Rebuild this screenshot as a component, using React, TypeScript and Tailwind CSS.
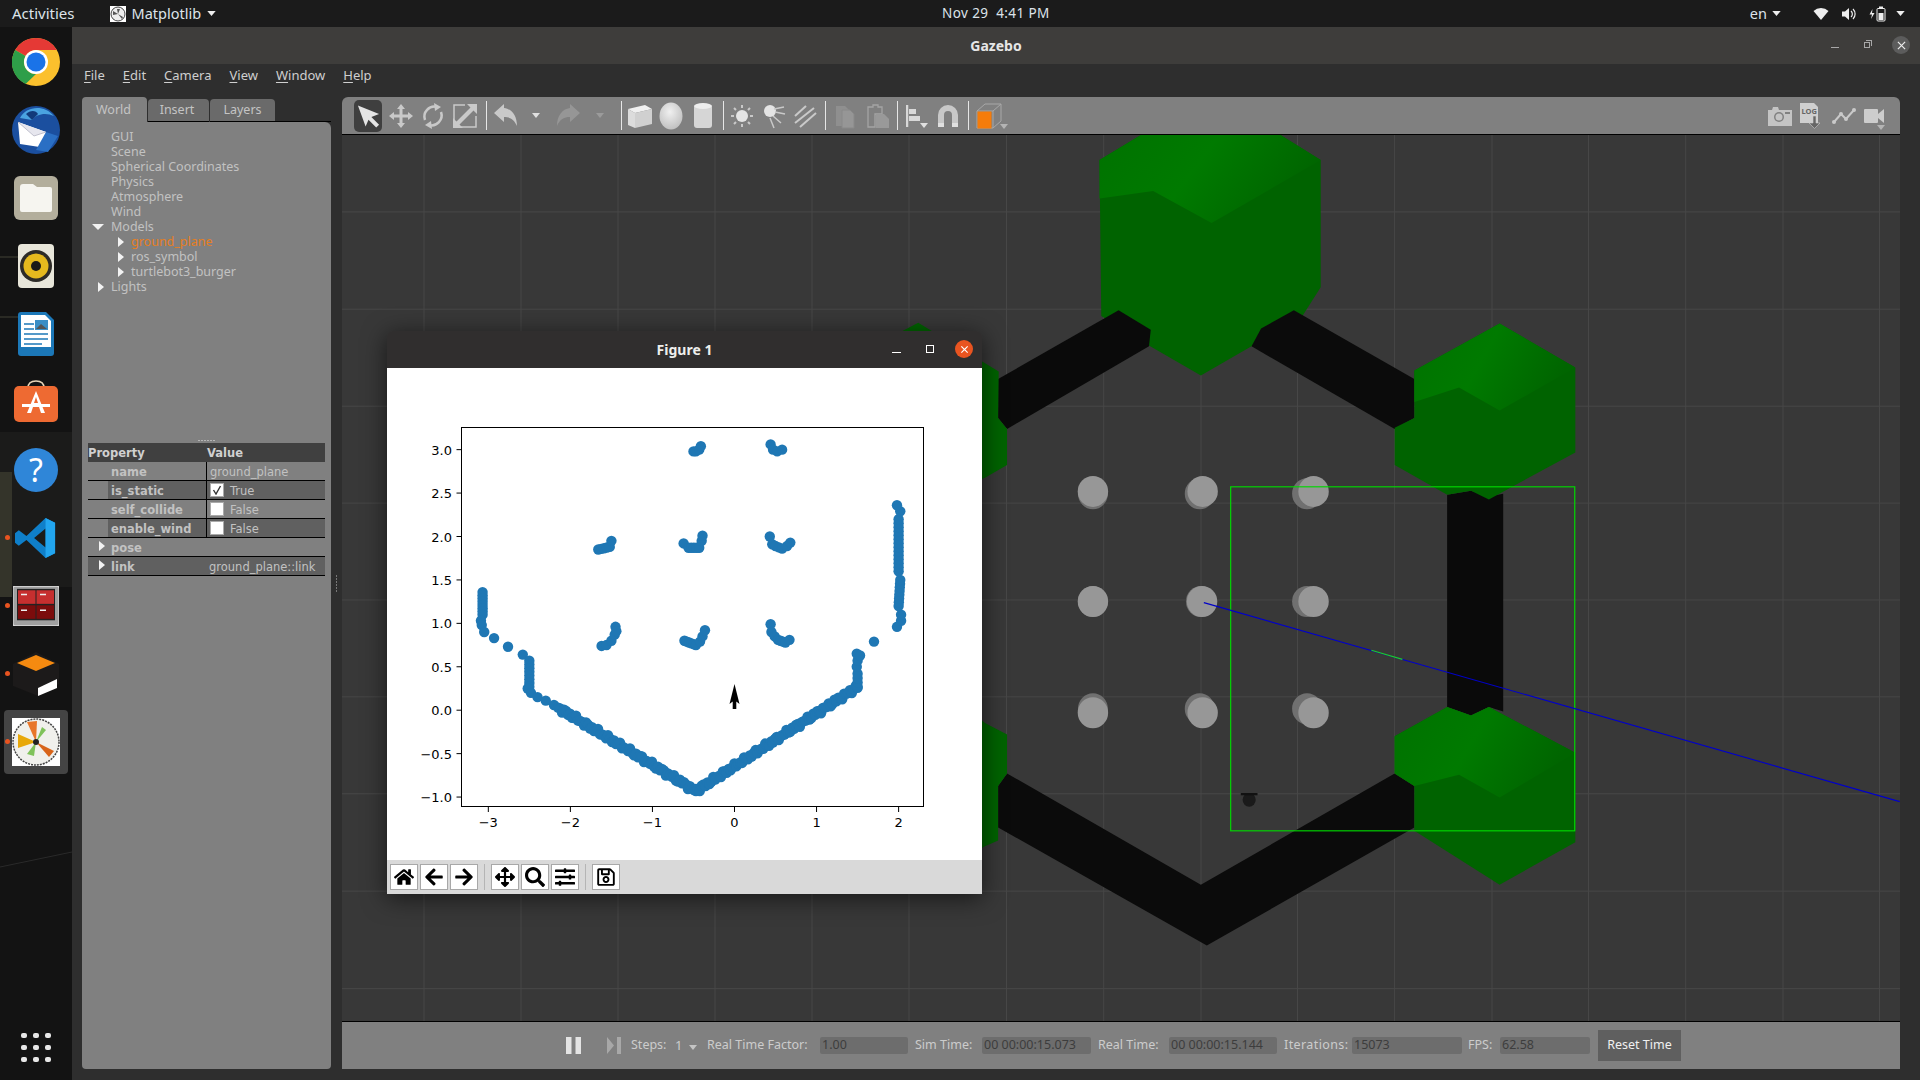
import type { ReactNode } from "react";
import { FaHome, FaArrowLeft, FaArrowRight, FaArrowsAlt, FaSearch, FaSlidersH, FaRegSave } from "react-icons/fa";

// small fixed wobble so the scan edge isn't ruler straight
const seg = (a: number[], b: number[], n: number) =>
  Array.from({ length: n }, (_, i) => {
    const w = n > 20 ? 0.022 * Math.sin(i * 2.3) + 0.012 * Math.sin(i * 5.1) : 0;
    return [a[0] + ((b[0] - a[0]) * i) / (n - 1), a[1] + ((b[1] - a[1]) * i) / (n - 1) + w];
  });

// lidar scan in data coords
const scan: number[][] = [
  [-0.5, 2.98], [-0.47, 2.98], [-0.43, 3.0], [-0.41, 3.04],
  [0.44, 3.06], [0.47, 3.0], [0.52, 2.98], [0.58, 3.0],
  ...seg([-1.66, 1.85], [-1.52, 1.88], 5), [-1.5, 1.95],
  [-0.62, 1.92], ...seg([-0.56, 1.87], [-0.43, 1.87], 5), [-0.4, 1.95], [-0.39, 2.01],
  [0.43, 2.0], [0.46, 1.91], ...seg([0.5, 1.89], [0.58, 1.86], 3), [0.64, 1.89], [0.68, 1.93],
  [-1.62, 0.74], [-1.56, 0.75], [-1.5, 0.8], [-1.46, 0.87], [-1.45, 0.96], [-1.44, 0.91],
  ...seg([-0.61, 0.8], [-0.47, 0.75], 6), [-0.42, 0.79], [-0.39, 0.85], [-0.36, 0.92],
  [0.44, 0.99], [0.45, 0.9], [0.49, 0.85], ...seg([0.53, 0.81], [0.62, 0.78], 4), [0.67, 0.81],
  ...seg([-3.07, 1.36], [-3.07, 1.1], 8), [-3.09, 1.03], [-3.08, 0.98], [-3.05, 0.9],
  [-2.93, 0.83], [-2.76, 0.73], [-2.58, 0.64],
  ...seg([-2.5, 0.57], [-2.5, 0.27], 8), [-2.52, 0.25], [-2.48, 0.2],
  [-2.4, 0.15], [-2.3, 0.11], [-2.2, 0.06],
  ...seg([-2.15, 0.03], [-0.47, -0.93], 70),
  ...seg([-0.47, -0.93], [1.5, 0.27], 85),
  ...seg([1.5, 0.27], [1.5, 0.42], 4), [1.49, 0.5], [1.5, 0.57], [1.49, 0.65], [1.53, 0.63],
  [1.7, 0.79],
  [1.98, 0.96], [2.03, 1.03], [2.03, 1.1], ...seg([2.0, 1.2], [2.02, 1.5], 8), ...seg([2.0, 1.6], [2.0, 2.2], 14), [2.02, 2.29], [1.98, 2.36],
];
const px = (x: number) => 734.5 + x * 82.06;
const py = (y: number) => 710.2 - y * 86.85;

function FigurePlot() {
  return (
    <svg viewBox="387 368 595 492" className="block h-[492px] w-[595px] bg-white">
      <rect x="461.5" y="427.5" width="462" height="379" fill="#fff" stroke="#000" strokeWidth="1" />
      {scan.map((p, i) => (
        <circle key={i} cx={px(p[0])} cy={py(p[1])} r="5.2" fill="#1f77b4" />
      ))}
      <path d="M734.5 684 L739.5 704 L736.3 701.5 L736.3 709 L732.7 709 L732.7 701.5 L729.5 704 Z" fill="#000" />
      {[-3, -2, -1, 0, 1, 2].map((t) => (
        <g key={t}>
          <line x1={px(t)} x2={px(t)} y1="807" y2="812" stroke="#000" />
          <text x={px(t)} y="827" textAnchor="middle" className="font-['DejaVu_Sans'] text-[13px]">
            {t < 0 ? `\u2212${-t}` : t}
          </text>
        </g>
      ))}
      {[-1, -0.5, 0, 0.5, 1, 1.5, 2, 2.5, 3].map((t) => (
        <g key={t}>
          <line x1="456.5" x2="461.5" y1={py(t)} y2={py(t)} stroke="#000" />
          <text x="452" y={py(t) + 5} textAnchor="end" className="font-['DejaVu_Sans'] text-[13px]">
            {t < 0 ? `\u2212${(-t).toFixed(1)}` : t.toFixed(1)}
          </text>
        </g>
      ))}
    </svg>
  );
}

function FigBtn({ children, className = "" }: { children: ReactNode; className?: string }) {
  return (
    <div className={`flex h-[26px] w-[28px] items-center justify-center border border-[#a8a8a8] bg-white text-[20px] text-black ${className}`}>
      {children}
    </div>
  );
}

function FigureWindow() {
  return (
    <div className="absolute left-[387px] top-[331px] z-20 flex w-[595px] flex-col overflow-hidden rounded-t-[6px] shadow-[0_4px_24px_rgba(0,0,0,0.6)]">
      <div className="relative flex h-[37px] items-center justify-center bg-[#302e2e] text-[14px] font-bold text-[#eeeeec]">
        Figure 1
        <span className="absolute left-[505px] top-[21px] h-px w-[9px] bg-white" />
        <span className="absolute left-[539px] top-[14px] h-[8px] w-[8px] border border-white" />
        <span className="absolute left-[568px] top-[9px] flex h-[18px] w-[18px] items-center justify-center rounded-full bg-[#e95420]">
          <svg viewBox="0 0 10 10" className="h-[9px] w-[9px]">
            <path d="M1.5 1.5 L8.5 8.5 M8.5 1.5 L1.5 8.5" stroke="#fff" strokeWidth="1.3" />
          </svg>
        </span>
      </div>
      <FigurePlot />
      <div className="flex h-[34px] items-center gap-[2px] bg-[#d9d9d9] pl-[3px]">
        <FigBtn><FaHome /></FigBtn>
        <FigBtn><FaArrowLeft /></FigBtn>
        <FigBtn><FaArrowRight /></FigBtn>
        <span className="mx-[4px] h-[26px] w-px bg-[#b5b5b5]" />
        <FigBtn><FaArrowsAlt /></FigBtn>
        <FigBtn><FaSearch /></FigBtn>
        <FigBtn><FaSlidersH /></FigBtn>
        <span className="mx-[4px] h-[26px] w-px bg-[#b5b5b5]" />
        <FigBtn><FaRegSave /></FigBtn>
      </div>
    </div>
  );
}

function TopBar() {
  return (
    <div className="relative flex h-[27px] shrink-0 items-center bg-[#1b1b1b] text-[14.5px] text-[#dde3ea]">
      <span className="ml-[12px] text-[15px]">Activities</span>
      <svg viewBox="0 0 16 16" className="ml-[35px] h-[16px] w-[16px]">
        <rect width="16" height="16" fill="#fff" />
        <circle cx="8" cy="8" r="7" fill="#eee" stroke="#444" strokeWidth="1" />
        <path d="M8 8 L3 5 L3 9 Z M8 8 L12 13 L13 11 Z M8 8 L10 3 L7 3 Z" fill="#555" />
      </svg>
      <span className="ml-[6px]">Matplotlib</span>
      <Caret className="ml-[6px]" />
      <span className="absolute left-[942px] top-[3px] text-[13.5px] tracking-[0.4px]">Nov 29&nbsp;&nbsp;4:41 PM</span>
      <div className="ml-auto flex items-center">
        <span>en</span>
        <Caret className="ml-[5px]" />
        <svg viewBox="0 0 16 14" className="ml-[32px] h-[14px] w-[16px]">
          <path d="M0.5 4 A11 11 0 0 1 15.5 4 L8 13 Z" fill="#eee" />
        </svg>
        <svg viewBox="0 0 16 14" className="ml-[12px] h-[14px] w-[16px]">
          <path d="M1 4.5 H4 L8 1 V13 L4 9.5 H1 Z" fill="#eee" />
          <path d="M10 4 A4 4 0 0 1 10 10 M12 2 A7 7 0 0 1 12 12" stroke="#eee" fill="none" strokeWidth="1.2" />
        </svg>
        <svg viewBox="0 0 18 16" className="ml-[12px] h-[16px] w-[18px]">
          <path d="M3.5 3 L0.5 8.5 H3 L2 13 L5.5 7 H3 Z" fill="#eee" />
          <rect x="8" y="2.5" width="8" height="12.5" rx="1" fill="none" stroke="#eee" />
          <rect x="10" y="0.5" width="4" height="2" fill="#eee" />
          <rect x="9.5" y="7" width="5" height="7" fill="#eee" />
        </svg>
        <Caret className="ml-[9px] mr-[15px]" />
      </div>
    </div>
  );
}

function Caret({ className = "" }: { className?: string }) {
  return (
    <svg viewBox="0 0 10 6" className={`h-[5px] w-[9px] ${className}`}>
      <path d="M0 0 H10 L5 6 Z" fill="#eee" />
    </svg>
  );
}

const dockIcons: ReactNode[] = [
  <svg key="chrome" viewBox="0 0 48 48" className="h-[48px] w-[48px]">
    <circle cx="24" cy="24" r="24" fill="#fbc02d" />
    <path d="M24 0 A24 24 0 0 1 44.8 12 H24 A12 12 0 0 0 13.6 18 L3.2 12 A24 24 0 0 1 24 0 Z" fill="#e53935" />
    <path d="M3.2 12 L13.6 18 A12 12 0 0 0 24 36 L13.6 46 A24 24 0 0 1 3.2 12 Z" fill="#2e9e49" />
    <circle cx="24" cy="24" r="12" fill="#fff" />
    <circle cx="24" cy="24" r="9.5" fill="#1a73e8" />
  </svg>,
  <svg key="tb" viewBox="0 0 48 48" className="h-[48px] w-[48px]">
    <circle cx="24" cy="24" r="24" fill="#1b4f9f" />
    <path d="M8 12 C14 0 32 -2 42 10 C34 6 24 8 20 14 Z" fill="#4aa3e0" />
    <path d="M6 16 L34 26 L34 42 L8 38 Z" fill="#fff" />
    <path d="M6 16 L22 30 L34 26" fill="#e6e6ee" stroke="#aab" strokeWidth="0.7" />
    <path d="M34 26 L46 30 L36 46 L24 44 Z" fill="#2a6fc4" />
    <path d="M14 8 C18 4 24 4 26 8 L20 14 Z" fill="#123a7a" />
  </svg>,
  <svg key="files" viewBox="0 0 44 44" className="h-[44px] w-[44px]">
    <rect width="44" height="44" rx="6" fill="#b3ae9c" />
    <path d="M6 11 Q6 8 9 8 H19 L23 11 H36 Q38 11 38 13 V34 Q38 36 36 36 H8 Q6 36 6 34 Z" fill="#f6f5f0" />
  </svg>,
  <svg key="rb" viewBox="0 0 36 44" className="h-[44px] w-[36px]">
    <rect width="36" height="44" rx="4" fill="#e8e6da" />
    <circle cx="18" cy="22" r="16" fill="#2d2b27" />
    <circle cx="18" cy="22" r="12.5" fill="#e5b91e" />
    <circle cx="18" cy="22" r="5" fill="#1c1b18" />
  </svg>,
  <svg key="writer" viewBox="0 0 36 44" className="h-[44px] w-[36px]">
    <path d="M0 3 Q0 0 3 0 H28 L36 8 V41 Q36 44 33 44 H3 Q0 44 0 41 Z" fill="#1c78b8" />
    <path d="M3 3 H27 L33 9 V35 H3 Z" fill="#fff" />
    <path d="M6 12 H16 M6 17 H16 M6 22 H30 M6 27 H30 M6 32 H24" stroke="#1c78b8" strokeWidth="1.7" />
    <rect x="17" y="8" width="13" height="10" fill="#3a8ec6" />
    <path d="M18 17 L23 12 L29 17 Z" fill="#555" />
  </svg>,
  <svg key="store" viewBox="0 0 44 44" className="h-[44px] w-[44px]">
    <path d="M14 8 Q14 1 22 1 Q30 1 30 8" fill="none" stroke="#e8d5b8" strokeWidth="1.6" />
    <rect y="6" width="44" height="36" rx="5" fill="#ee6a32" />
    <path d="M22 11 L31 33 H27 L25 27 H19 L17 33 H13 Z M20 23 H24 L22 17 Z" fill="#fff" />
    <rect x="8" y="24" width="28" height="3" fill="#fff" />
  </svg>,
  <div key="help" className="flex h-[44px] w-[44px] items-center justify-center rounded-full bg-[#2f86d8] text-[32px] leading-none text-white">?</div>,
  <svg key="vs" viewBox="0 0 44 44" className="h-[42px] w-[42px]">
    <path d="M32 1 L42 6 V38 L32 43 L12 24 L4 30 L0 27 V17 L4 14 L12 20 Z M32 12 L20 22 L32 32 Z" fill="#0f7fc9" />
    <path d="M32 1 L42 6 V38 L32 43 Z" fill="#22a5ef" />
  </svg>,
  <svg key="term" viewBox="0 0 46 28" className="h-[40px] w-[46px]" preserveAspectRatio="none">
    <rect width="46" height="28" rx="2" fill="#a0a0a0" stroke="#ddd" />
    <rect x="4" y="2" width="38" height="22" fill="#222" />
    <rect x="5" y="3" width="17.500" height="9.500" fill="#c62f2f" />
    <rect x="23.500" y="3" width="17.500" height="9.500" fill="#c62f2f" />
    <rect x="5" y="13.500" width="17.500" height="9.500" fill="#7b0c0c" />
    <rect x="23.500" y="13.500" width="17.500" height="9.500" fill="#7b0c0c" />
    <path d="M8 6 H14 M27 6 H33 M8 17 H14 M27 17 H33" stroke="#eee" strokeWidth="1" />
  </svg>,
  <svg key="gz" viewBox="0 0 48 44" className="h-[44px] w-[48px]">
    <path d="M1 12 L24 0 L47 12 V32 L26 44 L1 34 Z" fill="#1c1a1a" />
    <path d="M5 11 L24 3 L43 11 L24 19 Z" fill="#f58a10" />
    <path d="M26 36 L45 27 V36 L26 44 Z" fill="#fff" />
  </svg>,
  <svg key="mpl" viewBox="0 0 48 48" className="h-[48px] w-[48px]">
    <rect width="48" height="48" fill="#fff" />
    <circle cx="24" cy="24" r="23" fill="#f0f0ec" stroke="#444" strokeWidth="1.500" strokeDasharray="2 1" />
    <path d="M24 24 L6 16 L6 30 Z" fill="#e8a80a" />
    <path d="M24 24 L15 4 L25 3 Z" fill="#e8762a" />
    <path d="M24 24 L42 33 L37 39 Z" fill="#d8641a" />
    <path d="M24 24 L30 9 L34 12 Z" fill="#7fc25a" />
    <path d="M24 24 L15 36 L22 38 Z" fill="#7fc25a" />
    <circle cx="24" cy="24" r="3" fill="#222" />
  </svg>,
];

function Dock() {
  return (
    <div className="relative flex w-[72px] shrink-0 flex-col overflow-hidden bg-[#131313]">
      <svg viewBox="0 0 72 1053" className="absolute inset-0 h-full w-full">
        <path d="M0 405 H72 V560 H0 Z" fill="#1b1b1a" />
        <path d="M0 445 H12 V570 H0 Z" fill="#34342a" />
        <path d="M0 840 L72 825" stroke="#2a2a2a" />
        <path d="M0 290 H24 M0 230 H30" stroke="#2a2a24" strokeWidth="2" />
      </svg>
      <div className="relative flex flex-col pt-px">
        {dockIcons.map((ic, i) => (
          <div key={i} className="relative flex h-[68px] items-center justify-center">
            {i === 10 && <span className="absolute inset-x-[4px] top-[2px] bottom-[2px] rounded-[4px] bg-[#444444]" />}
            {i >= 7 && <span className="absolute left-[5px] top-[31px] h-[5px] w-[5px] rounded-full bg-[#e95420]" />}
            <span className="relative">{ic}</span>
          </div>
        ))}
      </div>
      <div className="relative mt-auto mb-[18px] grid grid-cols-3 gap-x-[6px] gap-y-[7px] self-center">
        {Array.from({ length: 9 }, (_, i) => (
          <span key={i} className="h-[5px] w-[6px] rounded-[2px] bg-[#e8e8e8]" />
        ))}
      </div>
    </div>
  );
}

function Tri({ down = false, className = "" }: { down?: boolean; className?: string }) {
  return down ? (
    <svg viewBox="0 0 12 6" className={`h-[6px] w-[12px] ${className}`}>
      <path d="M0 0 H12 L6 6 Z" fill="#f2f2f2" />
    </svg>
  ) : (
    <svg viewBox="0 0 6 10" className={`h-[10px] w-[6px] ${className}`}>
      <path d="M0 0 L6 5 L0 10 Z" fill="#f2f2f2" />
    </svg>
  );
}

function TreeRow({ label, indent = 0, tri, orange }: { label: string; indent?: number; tri?: "r" | "d"; orange?: boolean }) {
  return (
    <div className={`relative flex h-[15px] items-center ${indent ? "pl-[49px]" : "pl-[29px]"} ${orange ? "text-[#e67e22]" : ""}`}>
      {tri === "d" && <Tri down className="absolute left-[10px] top-[4px]" />}
      {tri === "r" && <Tri className={`absolute top-[2px] ${indent ? "left-[36px]" : "left-[16px]"}`} />}
      {label}
    </div>
  );
}

function PropRow({ name, value, alt, check, tri, span }: { name: string; value?: string; alt?: boolean; check?: "on" | "off"; tri?: boolean; span?: boolean }) {
  return (
    <div className={`relative flex h-[19px] items-center border-b border-black ${alt && tri ? "bg-[#606060]" : ""}`}>
      <div className="relative flex h-full w-[118px] shrink-0 items-center">
        {tri && <Tri className="absolute left-[11px] top-[3px]" />}
        <span className={`ml-[20px] flex h-full w-[98px] items-center pl-[3px] pt-[3px] font-bold ${alt && !tri ? "bg-[#606060]" : ""}`}>{name}</span>
      </div>
      <div className={`flex h-full flex-1 items-center pl-[3px] ${span ? "" : "border-l border-black"} ${alt && !tri ? "bg-[#606060]" : ""}`}>
        {check && (
          <span className="mr-[6px] flex h-[14px] w-[14px] items-center justify-center border border-[#aaa] bg-white">
            {check === "on" && (
              <svg viewBox="0 0 10 10" className="h-[10px] w-[10px]">
                <path d="M1.500 5 L4 9 L8.500 1" fill="none" stroke="#333" strokeWidth="1.400" />
              </svg>
            )}
          </span>
        )}
        <span className="pt-[3px]">{value}</span>
      </div>
    </div>
  );
}

function LeftPanel() {
  return (
    <div className="flex w-[249px] shrink-0 flex-col">
      <div className="flex h-[25px] items-end text-[12.500px] text-[#c4c4c4]">
        <div className="flex h-[25px] w-[65px] items-center justify-center rounded-t-[4px] bg-[#808080] pr-[2px] pt-px">World</div>
        <div className="ml-px flex h-[23px] w-[61px] items-center justify-center rounded-t-[4px] border-b border-black bg-[#6a6a6a] pr-[3px]">Insert</div>
        <div className="ml-px flex h-[23px] w-[65px] items-center justify-center rounded-t-[4px] border-b border-black bg-[#6a6a6a]">Layers</div>
        <div className="h-px flex-1 bg-black" />
      </div>
      <div className="flex flex-1 flex-col rounded-tr-[6px] rounded-b-[4px] bg-[#808080] text-[#c2c2c2]">
        <div className="h-[318px] pt-[8px] text-[12.500px]">
          <TreeRow label="GUI" />
          <TreeRow label="Scene" />
          <TreeRow label="Spherical Coordinates" />
          <TreeRow label="Physics" />
          <TreeRow label="Atmosphere" />
          <TreeRow label="Wind" />
          <TreeRow label="Models" tri="d" />
          <TreeRow label="ground_plane" indent={1} tri="r" orange />
          <TreeRow label="ros_symbol" indent={1} tri="r" />
          <TreeRow label="turtlebot3_burger" indent={1} tri="r" />
          <TreeRow label="Lights" tri="r" />
        </div>
        <div className="flex h-[3px] justify-center gap-px">
          {Array.from({ length: 6 }, (_, i) => (
            <span key={i} className="h-px w-[2px] bg-[#b5b5b5]" />
          ))}
        </div>
        <div className="mx-[6px] font-['DejaVu_Sans'] text-[11.500px]">
          <div className="flex h-[19px] items-center bg-[#404040] pt-[2px] font-bold text-[#d0d0d0]">
            <span className="w-[119px]">Property</span>
            <span>Value</span>
          </div>
          <PropRow name="name" value="ground_plane" />
          <PropRow name="is_static" value="True" alt check="on" />
          <PropRow name="self_collide" value="False" check="off" />
          <PropRow name="enable_wind" value="False" alt check="off" />
          <PropRow name="pose" tri span />
          <PropRow name="link" value="ground_plane::link" alt tri span />
        </div>
      </div>
    </div>
  );
}

const I = ({ w = 26, children, className = "" }: { w?: number; children: ReactNode; className?: string }) => (
  <svg viewBox="0 0 26 26" width={w} height={26} className={`shrink-0 ${className}`}>
    {children}
  </svg>
);
const Sep = ({ className = "" }: { className?: string }) => <span className={`h-[29px] w-px shrink-0 bg-[#e6e6e6] ${className}`} />;
const Drop = ({ color = "#e0e0e0", className = "" }: { color?: string; className?: string }) => (
  <svg viewBox="0 0 8 5" className={`h-[5px] w-[8px] shrink-0 ${className}`}>
    <path d="M0 0 H8 L4 5 Z" fill={color} />
  </svg>
);

function Toolbar() {
  const c = "#c9c9c9";
  return (
    <div className="flex h-[38px] shrink-0 items-center rounded-t-[6px] border-b border-black bg-[#808080] pl-[12px] pr-[16px]">
      <div className="flex h-[32px] w-[28px] shrink-0 items-center justify-center rounded-[5px] bg-[#3f3f3f]">
        <svg viewBox="0 0 26 26" width="25" height="26">
          <path d="M2 2 L24 11 L16 14 L24 22 L21 25 L13 17 L10 24 Z" fill="#e4e4e4" />
        </svg>
      </div>
      <I className="ml-[6px]">
        <path d="M13 1 L17 6 H14.500 V11.500 H20 V9 L25 13 L20 17 V14.500 H14.500 V20 H17 L13 25 L9 20 H11.500 V14.500 H6 V17 L1 13 L6 9 V11.500 H11.500 V6 H9 Z" fill={c} />
      </I>
      <I className="ml-[6px]">
        <path d="M5 17 A10 10 0 0 1 17 4 M21 9 A10 10 0 0 1 9 22" fill="none" stroke={c} strokeWidth="2.500" />
        <path d="M14 0 L21 4 L15 8 Z M12 26 L5 22 L11 18 Z" fill={c} />
      </I>
      <I className="ml-[6px]">
        <path d="M13 2 H2 V24 H24 V13" fill="none" stroke={c} strokeWidth="1.500" />
        <path d="M15 1 H25 V11 L21.500 7.500 L7.500 21.500 L11 25 H1 V15 L4.500 18.500 L18.500 4.500 Z" fill={c} />
      </I>
      <Sep className="ml-[8px]" />
      <I className="ml-[6px]">
        <path d="M11 5 V1 L1 10 L11 19 V14 C17 14 21 16 24 23 C24 13 19 6 11 5 Z" fill={c} />
      </I>
      <Drop className="ml-[13px]" />
      <I className="ml-[15px]">
        <path d="M15 5 V1 L25 10 L15 19 V14 C9 14 5 16 2 23 C2 13 7 6 15 5 Z" fill="#969696" />
      </I>
      <Drop color="#9b9b9b" className="ml-[15px]" />
      <Sep className="ml-[17px]" />
      <I className="ml-[5px]">
        <path d="M1 6 L18 2 L25 6 L8 10 Z" fill="#f0f0f0" />
        <path d="M1 6 L8 10 V25 L1 22 Z" fill="#dcdcdc" />
        <path d="M8 10 L25 6 V21 L8 25 Z" fill="#d0d0d0" />
      </I>
      <svg width="24" height="28" viewBox="0 0 24 28" className="ml-[6px] shrink-0">
        <defs>
          <radialGradient id="sph" cx="0.45" cy="0.35" r="0.7">
            <stop offset="0" stopColor="#f0f0f0" />
            <stop offset="1" stopColor="#bdbdbd" />
          </radialGradient>
        </defs>
        <ellipse cx="12" cy="14" rx="11.500" ry="13.500" fill="url(#sph)" />
      </svg>
      <svg width="20" height="28" viewBox="0 0 20 28" className="ml-[10px] shrink-0">
        <rect x="1" y="3" width="18" height="23" rx="3" fill="#d6d6d6" />
        <ellipse cx="10" cy="4" rx="9" ry="3" fill="#eee" />
      </svg>
      <Sep className="ml-[10px]" />
      <I className="ml-[5px]">
        <circle cx="13" cy="13" r="6" fill="#e4e4e4" />
        <path d="M13 2 V5 M13 21 V24 M2 13 H5 M21 13 H24 M5 5 L7 7 M19 19 L21 21 M21 5 L19 7 M7 19 L5 21" stroke={c} strokeWidth="2" />
      </I>
      <I className="ml-[6px]">
        <circle cx="9" cy="8" r="6" fill="#e4e4e4" />
        <path d="M13 6 L23 4 M14 9 L24 11 M12 13 L20 20 M9 15 L13 25" stroke={c} strokeWidth="1.500" />
      </I>
      <I className="ml-[5px]">
        <path d="M3 13 L14 3 M3 20 L22 5 M8 24 L24 10" stroke={c} strokeWidth="2" />
      </I>
      <Sep className="ml-[7px]" />
      <I className="ml-[6px]">
        <path d="M4 3 H13 L17 7 V23 H4 Z" fill="#8f8f8f" />
        <path d="M10 7 H18 L22 11 V25 H10 Z" fill="#969696" stroke="#888" />
      </I>
      <I className="ml-[7px]">
        <path d="M3 4 H8 V2 H13 V4 H17 V11 H10 V24 H3 Z" fill="none" stroke="#a4a4a4" strokeWidth="1.300" />
        <path d="M11 11 H19 L24 16 V25 H11 Z" fill="#999" />
      </I>
      <Sep className="ml-[6px]" />
      <div className="ml-[8px] flex shrink-0 items-end">
        <svg width="14" height="26" viewBox="0 0 14 26">
          <path d="M1 2 V24" stroke="#d8d8d8" strokeWidth="2.500" />
          <rect x="3" y="6" width="7" height="5" fill="#d8d8d8" />
          <rect x="3" y="13" width="11" height="5" fill="#d8d8d8" />
        </svg>
        <Drop className="mb-[1px]" />
      </div>
      <I className="ml-[7px]">
        <path d="M3 24 V12 A10 10 0 0 1 23 12 V24 H17 V12 A4 4 0 0 0 9 12 V24 Z" fill="#c8c8c8" />
        <path d="M3 24 V20 H9 V24 Z M17 24 V20 H23 V24 Z" fill="#e0e0e0" />
      </I>
      <Sep className="ml-[7px]" />
      <div className="relative ml-[7px] h-[28px] w-[30px] shrink-0">
        <svg viewBox="0 0 30 28" className="h-[28px] w-[30px]">
          <path d="M1 9 L9 2 H25 V19 L17 26 H1 Z M1 9 H17 V26 M17 9 L25 2" fill="none" stroke="#a8a8a8" />
          <rect x="1.500" y="9.500" width="14" height="17" fill="#f57c0b" />
        </svg>
        <Drop color="#b4b4b4" className="absolute bottom-[1px] -right-[2px]" />
      </div>
      <div className="ml-auto flex items-center gap-[8px]">
        <svg width="24" height="20" viewBox="0 0 24 20">
          <path d="M0 4 H4 L5 1 H10 L11 4 H24 V20 H0 Z" fill="#c4c4c4" />
          <circle cx="11" cy="11" r="5" fill="#808080" />
          <circle cx="11" cy="11" r="3.500" fill="#c4c4c4" />
          <rect x="17" y="6" width="5" height="2" fill="#808080" />
        </svg>
        <svg width="24" height="26" viewBox="0 0 24 26">
          <path d="M0 0 H14 L18 4 V20 H0 Z" fill="#cfcfcf" />
          <text x="1.500" y="10.500" className="font-['Noto_Sans'] text-[7.500px] font-bold" fill="#666">LOG</text>
          <path d="M13 13 H16 V20 H20 L14.500 25.500 L9 20 H13 Z" fill="#666" stroke="#cfcfcf" strokeWidth="0.600" />
        </svg>
        <svg width="24" height="18" viewBox="0 0 24 18">
          <path d="M2 15 L9 7 L14 12 L22 3" fill="none" stroke="#c9c9c9" strokeWidth="2" />
          <circle cx="2" cy="15" r="2" fill="#c9c9c9" />
          <circle cx="9" cy="7" r="2" fill="#c9c9c9" />
          <circle cx="14" cy="12" r="2" fill="#c9c9c9" />
          <circle cx="22" cy="3" r="2" fill="#c9c9c9" />
        </svg>
        <div className="relative">
          <svg width="20" height="14" viewBox="0 0 20 14" className="block">
            <rect width="14" height="14" rx="1" fill="#cdcdcd" />
            <path d="M14 5 L20 0 V14 L14 9 Z" fill="#cdcdcd" />
          </svg>
          <Drop color="#b4b4b4" className="absolute -bottom-[7px] right-[-1px]" />
        </div>
      </div>
    </div>
  );
}

function Scene() {
  const vx = [1006.5, 1103.7, 1201, 1297.5, 1394.6, 1492, 1588.5, 1685.7, 1783, 1879.5, 909, 812, 715, 618, 521, 424];
  const hy = [212, 309.4, 406.5, 503.5, 600.5, 697.5, 794.5, 892, 989.6];
  const cyl: number[][] = [
    [181, 650, 181, 646], [360, 650, 365, 646], [540, 650, 551, 646],
    [181, 838, 181, 838], [362, 838, 364, 838], [540, 838, 551, 838],
    [181, 1025, 181, 1032], [360, 1025, 365, 1032], [540, 1025, 551, 1032],
  ];
  return (
    <svg viewBox="342 135 1558 887" className="block h-[887px] w-full flex-1" preserveAspectRatio="none">
      <defs>
        <linearGradient id="hexTop" x1="0" y1="0" x2="1" y2="0.3">
          <stop offset="0" stopColor="#007200" />
          <stop offset="0.5" stopColor="#007a00" />
          <stop offset="1" stopColor="#006500" />
        </linearGradient>
      </defs>
      <rect x="342" y="135" width="1558" height="887" fill="#383838" />
      {vx.map((x) => (
        <line key={x} x1={x} x2={x} y1="135" y2="1022" stroke="#474747" />
      ))}
      {hy.map((y) => (
        <line key={y} x1="342" x2="1900" y1={y} y2={y} stroke="#474747" />
      ))}
      <g transform="translate(985 121) scale(0.5963 0.574)">
        {/* top hex */}
        <polygon points="192,68 262,24 495,24 563,68 563,290 520,360 447,393 362,444 277,393 195,340" fill="#006300" />
        <polygon points="192,68 262,24 495,24 563,68 380,178 282,122 192,135" fill="url(#hexTop)" />
        {/* walls */}
        <polygon points="22,450 224,330 278,364 275,393 37,537 22,518" fill="#0a0a0a" />
        <polygon points="447,393 463,362 518,330 720,450 720,518 687,537" fill="#0b0b0b" />
        <polygon points="775,652 815,645 845,655 869,650 869,1030 845,1022 815,1037 775,1022" fill="#0a0a0a" />
        <polygon points="37,1138 362,1332 687,1138 720,1160 720,1232 372,1438 22,1232 22,1160" fill="#0b0b0b" />
        {/* right top hex */}
        <polygon points="720,435 863,353 990,430 990,578 845,660 815,645 775,652 687,600 687,535 720,518" fill="#006300" />
        <polygon points="720,435 863,353 990,430 863,505 795,465 720,490" fill="url(#hexTop)" />
        {/* lower right hex */}
        <polygon points="775,1022 815,1037 845,1022 990,1102 990,1258 863,1332 720,1238 720,1160 687,1138 687,1073" fill="#006300" />
        <polygon points="687,1073 775,1022 815,1037 845,1022 990,1102 863,1180 795,1140 720,1160 687,1138" fill="url(#hexTop)" />
        {/* left hexes peeking out beside the figure */}
        <polygon points="-200,400 -112,352 23,437 22,518 37,537 37,600 0,622 -200,700" fill="#006300" />
        <polygon points="-60,1000 0,1050 37,1070 37,1138 22,1160 22,1255 0,1265 -60,1300" fill="#006300" />
        {cyl.map((c, i) => (
          <g key={i}>
            <ellipse cx={c[0]} cy={c[1]} rx="25" ry="27" fill="#707070" />
            <ellipse cx={c[2]} cy={c[3]} rx="25.500" ry="27" fill="#979797" />
          </g>
        ))}
        <rect x="412" y="638" width="577" height="600" fill="none" stroke="#00d800" strokeWidth="2" />
        <line x1="367" y1="840" x2="1534" y2="1187" stroke="#0000c8" strokeWidth="2" />
        <line x1="648" y1="923" x2="700" y2="939" stroke="#20d020" strokeWidth="2" />
        <ellipse cx="443" cy="1184" rx="11" ry="12" fill="#1a1a1a" />
        <path d="M429 1174 H457" stroke="#111" strokeWidth="4" />
      </g>
    </svg>
  );
}

const Lbl = ({ children, className = "" }: { children: ReactNode; className?: string }) => (
  <span className={`shrink-0 whitespace-nowrap text-[#cccccc] ${className}`}>{children}</span>
);
const Fld = ({ children, w, className = "" }: { children: ReactNode; w: number; className?: string }) => (
  <span className={`flex h-[17px] shrink-0 items-center rounded-[2px] bg-[#6d6d6d] pl-[2px] text-[#3d3d3d] ${className}`} style={{ width: w }}>
    {children}
  </span>
);

function BottomBar() {
  return (
    <div className="flex h-[48px] shrink-0 items-center border-t border-black bg-[#808080] pl-[224px] text-[12.5px]">
      <svg width="15" height="17" viewBox="0 0 15 17" className="shrink-0">
        <rect width="5.500" height="17" fill="#e4e4e4" />
        <rect x="9.500" width="5.500" height="17" fill="#e4e4e4" />
      </svg>
      <svg width="15" height="17" viewBox="0 0 15 17" className="ml-[26px] shrink-0">
        <path d="M0 0 L7 8.500 L0 17 Z" fill="#a8a8a8" />
        <rect x="10" width="4" height="17" fill="#a8a8a8" />
      </svg>
      <Lbl className="ml-[9px] w-[36px]">Steps:</Lbl>
      <Lbl className="ml-[8px] w-[9px] text-[13px]">1</Lbl>
      <Drop color="#c4c4c4" className="ml-[5px] mt-[4px] h-[4px] w-[6px]" />
      <Lbl className="ml-[10px] w-[105px]">Real Time Factor:</Lbl>
      <Fld w={88} className="ml-[8px]">1.00</Fld>
      <Lbl className="ml-[7px] w-[59px]">Sim Time:</Lbl>
      <Fld w={109} className="ml-[8px]">00 00:00:15.073</Fld>
      <Lbl className="ml-[7px] w-[63px]">Real Time:</Lbl>
      <Fld w={108} className="ml-[8px]">00 00:00:15.144</Fld>
      <Lbl className="ml-[7px] w-[60px] tracking-[0.4px]">Iterations:</Lbl>
      <Fld w={110} className="ml-[8px]">15073</Fld>
      <Lbl className="ml-[6px] w-[25px]">FPS:</Lbl>
      <Fld w={90} className="ml-[7px]">62.58</Fld>
      <div className="ml-[8px] flex h-[31px] w-[83px] shrink-0 items-center justify-center bg-[#5f5f5f] text-[#f0f0f0]">Reset Time</div>
    </div>
  );
}

export default function App() {
  return (
    <div className="relative flex h-screen w-screen flex-col overflow-hidden bg-[#131313] font-['Noto_Sans',sans-serif]">
      <TopBar />
      <div className="flex min-h-0 flex-1">
        <Dock />
        <div className="flex min-w-0 flex-1 flex-col bg-[#2e2e2e]">
          <div className="relative flex h-[37px] shrink-0 items-center justify-center bg-[#3e3d3b] text-[14px] font-bold text-[#e6e6e6]">
            Gazebo
            <span className="absolute right-[81px] top-[20px] h-px w-[8px] bg-[#a8a8a8]" />
            <span className="absolute right-[50px] top-[15px] h-[6px] w-[6px] border border-[#a8a8a8]" />
            <span className="absolute right-[48px] top-[13px] h-[6px] w-[6px] border-r border-t border-[#a8a8a8]" />
            <span className="absolute right-[10px] top-[9px] flex h-[18px] w-[18px] items-center justify-center rounded-full bg-[#5c5c5c]">
              <svg viewBox="0 0 10 10" className="h-[9px] w-[9px]">
                <path d="M1 1 L9 9 M9 1 L1 9" stroke="#eee" strokeWidth="1.300" />
              </svg>
            </span>
          </div>
          <div className="flex h-[33px] shrink-0 items-start gap-[18px] pl-[12px] pt-[2px] text-[13px] text-[#cfcfcf]">
            {["File", "Edit", "Camera", "View", "Window", "Help"].map((m) => (
              <span key={m}>
                <span className="underline underline-offset-2">{m[0]}</span>
                {m.slice(1)}
              </span>
            ))}
          </div>
          <div className="flex min-h-0 flex-1 pb-[11px] pl-[10px] pr-[20px]">
            <LeftPanel />
            <div className="relative w-[11px] shrink-0">
              <div className="absolute left-[5px] top-[478px] flex flex-col gap-px">
                {Array.from({ length: 6 }, (_, i) => (
                  <span key={i} className="h-[2px] w-px bg-[#777]" />
                ))}
              </div>
            </div>
            <div className="flex min-w-0 flex-1 flex-col">
              <Toolbar />
              <Scene />
              <BottomBar />
            </div>
          </div>
        </div>
      </div>
      <FigureWindow />
    </div>
  );
}
